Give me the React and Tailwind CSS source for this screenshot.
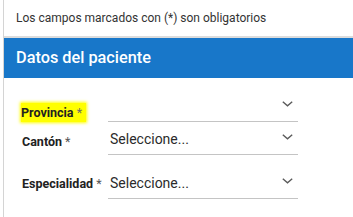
import React from "react";

function Chevron() {
  return (
    <svg width="11" height="6" viewBox="0 0 11 6" className="shrink-0">
      <polyline points="0.8,0.8 5.5,4.8 10.2,0.8" fill="none" stroke="#5a5a5a" strokeWidth="1.4" />
    </svg>
  );
}

function Select({ value }) {
  return (
    <div className="w-[190px] h-[31px] border-b border-[#c4c4c4] flex items-center pl-[2px] pr-[5px]">
      <span className="flex-1 text-[14px] leading-[20px] text-[#2b2b2b]">{value}</span>
      <div className="self-start mt-[10px]">
        <Chevron />
      </div>
    </div>
  );
}

export default function App() {
  return (
    <div className="w-[353px] h-[217px] bg-white overflow-hidden" style={{ fontFamily: "Roboto, 'Liberation Sans', sans-serif" }}>
      <div className="ml-[3px] h-full border-l border-[#d4d4d4] flex flex-col">
        <div className="h-[36px] flex items-center pl-[12px] text-[12px] text-[#333333]">
          Los campos marcados con (*) son obligatorios
        </div>
        <div className="h-[2px] bg-[#dcdcdc]" />
        <div className="h-[40px] bg-[#1877c9] flex items-center pl-[12px] text-[16.3px] font-medium text-white">
          Datos del paciente
        </div>
        <div className="pl-[18px] pt-[13px] flex flex-col">
          <div className="flex">
            <div className="w-[86px] pt-[9px]">
              <span className="inline-block bg-[#ffff00] shadow-[0_0_3px_1px_#ffff00] leading-[19px] text-[12.5px] pr-[4px] -ml-[1px]">
                <span className="font-bold text-[#222]">Provincia</span>
                <span className="text-[#6b6b6b]"> *</span>
              </span>
            </div>
            <Select value="" />
          </div>
          <div className="flex">
            <div className="w-[86px] pt-[8px] text-[12.5px] leading-[19px]">
              <span className="font-bold text-[#222]">Cantón</span>
              <span className="text-[#555]"> *</span>
            </div>
            <Select value="Seleccione..." />
          </div>
          <div className="flex mt-[13px]">
            <div className="w-[86px] pt-[6px] text-[12.5px] leading-[19px] whitespace-nowrap">
              <span className="font-bold text-[#222]">Especialidad</span>
              <span className="text-[#555]"> *</span>
            </div>
            <Select value="Seleccione..." />
          </div>
        </div>
      </div>
    </div>
  );
}
